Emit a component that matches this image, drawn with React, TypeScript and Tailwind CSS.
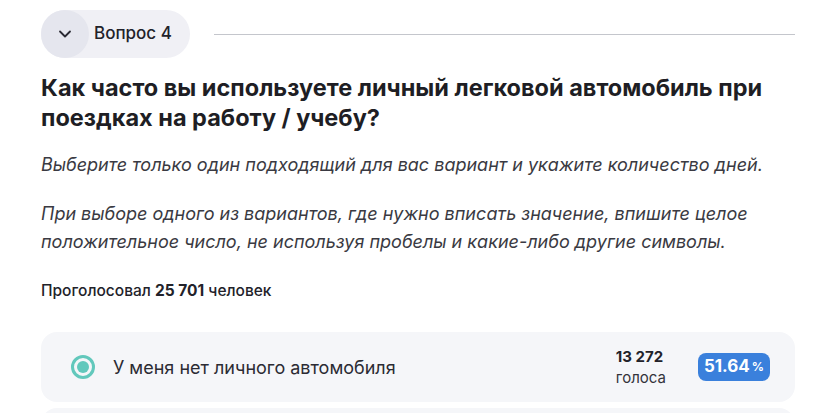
import { ChevronDown } from "lucide-react";

const font = { fontFamily: "Inter, 'Noto Sans', sans-serif" };

function QuestionHeader({ index }: { index: number }) {
  return (
    <div className="flex items-center gap-6">
      <div className="flex h-12 items-center rounded-full bg-[#f0f0f5] pr-[18px]">
        <span className="flex h-12 w-12 items-center justify-center rounded-full bg-[#e5e6ee]">
          <ChevronDown className="h-5 w-5 text-[#2a2a33]" strokeWidth={2.2} />
        </span>
        <span className="ml-[5px] text-[17px] font-medium text-[#22222a]">
          Вопрос {index}
        </span>
      </div>
      <div className="h-px flex-1 bg-[#c4c6cc]" />
    </div>
  );
}

function OptionRow({
  label,
  votes,
  percent,
  selected,
}: {
  label: string;
  votes: string;
  percent: string;
  selected?: boolean;
}) {
  return (
    <div className="flex h-[70px] items-center rounded-2xl bg-[#f5f6f9] pl-[30px] pr-[25px]">
      <span className="flex h-6 w-6 items-center justify-center rounded-full border-[3px] border-[#62c8bc]">
        {selected && <span className="h-3 w-3 rounded-full bg-[#62c8bc]" />}
      </span>
      <span className="ml-[18px] flex-1 text-[18px] text-[#2b2b33]">{label}</span>
      <div className="mr-[32px] flex flex-col leading-[21px]">
        <span className="text-[15px] font-bold text-[#22222a]">{votes}</span>
        <span className="text-[15px] text-[#33333b]">голоса</span>
      </div>
      <span className="flex h-7 items-center rounded-lg bg-[#3a80dc] px-1.5 text-white">
        <span className="text-[17px] font-bold">{percent}</span>
        <span className="ml-0.5 text-[12px] font-bold">%</span>
      </span>
    </div>
  );
}

export default function App() {
  return (
    <div className="h-[413px] w-[825px] overflow-hidden bg-white" style={font}>
      <div className="pl-[41px] pr-[30px] pt-[10px]">
        <QuestionHeader index={4} />
        <h2 className="mt-[15px] text-[23.5px] font-bold leading-[30px] text-[#1e1e24]">
          Как часто вы используете личный легковой автомобиль при поездках на работу / учебу?
        </h2>
        <p className="mt-[18px] text-[18px] italic leading-[28px] text-[#3a3a42]">
          Выберите только один подходящий для вас вариант и укажите количество дней.
        </p>
        <p className="mt-[21px] text-[18px] italic leading-[28px] text-[#3a3a42]">
          При выборе одного из вариантов, где нужно вписать значение, впишите целое положительное
          число, не используя пробелы и какие-либо другие символы.
        </p>
        <p className="mt-[24px] text-[15.5px] font-medium leading-[22px] text-[#22222a]">
          Проголосовал <span className="font-bold">25 701</span> человек
        </p>
        <div className="mt-[30px] flex flex-col gap-[6px]">
          <OptionRow
            label="У меня нет личного автомобиля"
            votes="13 272"
            percent="51.64"
            selected
          />
          <div className="h-[70px] rounded-2xl bg-[#f5f6f9]" />
        </div>
      </div>
    </div>
  );
}
